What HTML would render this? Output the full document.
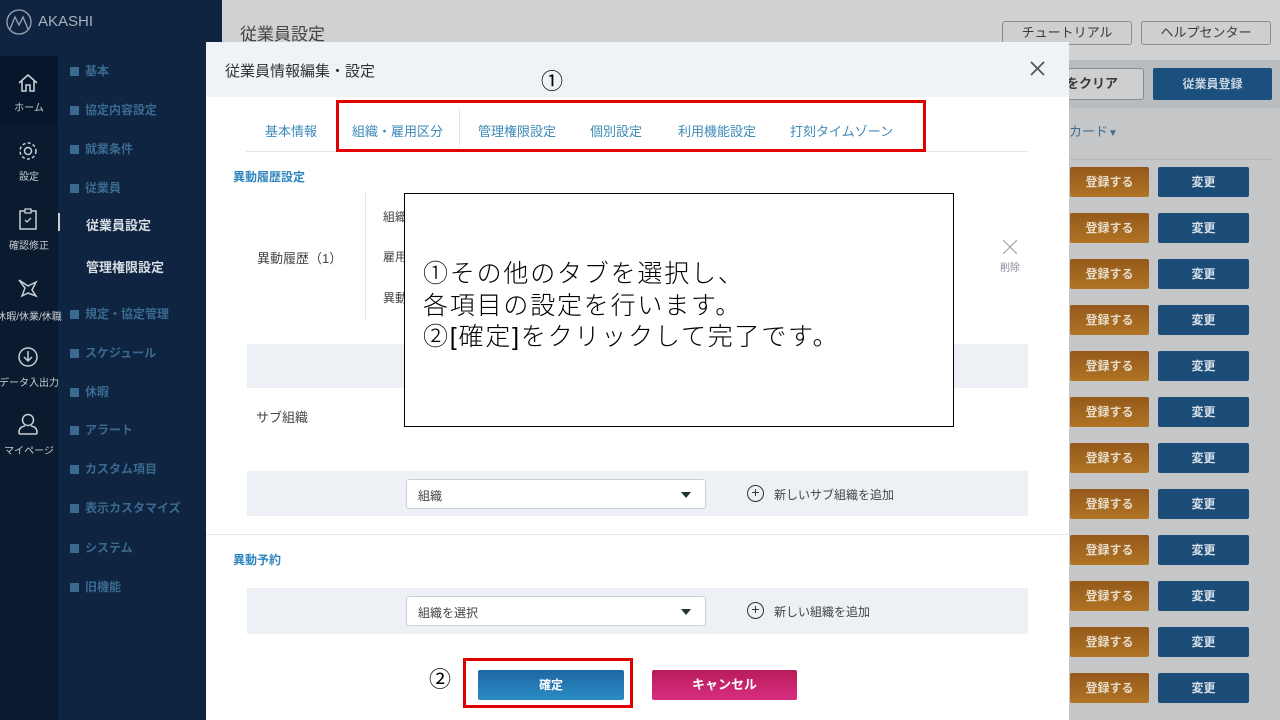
<!DOCTYPE html>
<html><head><meta charset="utf-8"><style>
*{margin:0;padding:0;box-sizing:border-box}
body{width:1280px;height:720px;overflow:hidden;position:relative;font-family:"Liberation Sans","Noto Sans CJK JP",sans-serif;background:#c4c6c8}
.a{position:absolute;white-space:nowrap}
.side{left:0;top:0;width:222px;height:720px;background:#0e2440}
.icol{left:0;top:56px;width:58px;height:664px;background:#0a1a2f}
.ic{left:0;width:58px;text-align:center;color:#c9ced4;font-size:10px}
.mi{left:70px;color:#3a6a90;font-size:12px;font-weight:bold}
.mi:before{content:"";display:inline-block;width:9px;height:9px;background:#3a6a90;margin-right:6px;vertical-align:-1px}
.sub{left:86px;color:#d8dde2;font-size:13px;font-weight:bold}
.btn{border:1px solid #8a8c8e;border-radius:3px;text-align:center;font-size:13px;color:#3a3a3a;background:#cdcfd1}
.or{left:1070px;width:79px;height:30px;background:linear-gradient(#94591a,#b07425);color:#e8dcc8;font-size:12px;font-weight:bold;text-align:center;line-height:30px;border-radius:2px}
.bl{left:1158px;width:91px;height:30px;background:#1b4d78;color:#d8e0e8;font-size:12px;font-weight:bold;text-align:center;line-height:30px;border-radius:2px}
.hr{left:1070px;width:202px;height:1px;background:#b5b7b9}
.modal{left:206px;top:42px;width:863px;height:678px;background:#fff}
.mh{left:206px;top:42px;width:863px;height:55px;background:#eef3f7}
.tab{top:121px;font-size:13px;color:#3d8ab8}
.lab{font-size:12px;color:#444}
.band{left:247px;width:781px;background:#edf1f5}
.sel{left:406px;width:300px;height:30px;background:#fff;border:1px solid #c8d0d8;border-radius:3px;font-size:12px;color:#444;padding:7px 11px}
.sel:after{content:"";position:absolute;right:14px;top:12px;border-left:5px solid transparent;border-right:5px solid transparent;border-top:6px solid #233}
.plus{width:17px;height:17px;border:1.5px solid #333;border-radius:50%;text-align:center;font-size:14px;line-height:13px;color:#333}
.red{border:3px solid #e00000}
</style></head><body>
<div class="a side"></div>
<div class="a icol"></div>
<div class="a" style="left:0;top:56px;width:58px;height:69px;background:#07162a"></div>
<svg class="a" style="left:5px;top:8px" width="28" height="28" viewBox="0 0 28 28"><circle cx="14" cy="14" r="12" fill="none" stroke="#9aa6b2" stroke-width="1.3"/><path d="M5 21 L10 9 L14 17 L18 9 L23 21" fill="none" stroke="#9aa6b2" stroke-width="1.3"/></svg>
<div class="a" style="left:38px;top:13px;color:#a8b2bc;font-size:15px">AKASHI</div>
<svg class="a" style="left:17px;top:72px" width="22" height="22" viewBox="0 0 22 22"><path d="M2 11 L11 3 L20 11 M5 9 V19 H9 V13 H13 V19 H17 V9" fill="none" stroke="#c9ced4" stroke-width="1.6"/></svg>
<div class="a ic" style="top:99px">ホーム</div>
<svg class="a" style="left:17px;top:140px" width="22" height="22" viewBox="0 0 22 22"><circle cx="11" cy="11" r="3.5" fill="none" stroke="#c9ced4" stroke-width="1.5"/><circle cx="11" cy="11" r="8" fill="none" stroke="#c9ced4" stroke-width="1.5" stroke-dasharray="3 2.3"/></svg>
<div class="a ic" style="top:168px">設定</div>
<svg class="a" style="left:18px;top:207px" width="20" height="24" viewBox="0 0 20 24"><rect x="2" y="4" width="16" height="18" fill="none" stroke="#c9ced4" stroke-width="1.5"/><rect x="7" y="2" width="6" height="4" fill="#0a1a2f" stroke="#c9ced4" stroke-width="1.3"/><path d="M7 13 L9 15 L13 11" fill="none" stroke="#c9ced4" stroke-width="1.3"/></svg>
<div class="a ic" style="top:237px">確認修正</div>
<div class="a" style="left:58px;top:213px;width:2px;height:18px;background:#c9ced4"></div>
<svg class="a" style="left:16px;top:276px" width="24" height="24" viewBox="0 0 24 24"><path d="M3 4 L12 10 L20 6 L16 14 L20 20 L12 17 L6 20 L9 12 Z" fill="none" stroke="#c9ced4" stroke-width="1.5"/></svg>
<div class="a ic" style="top:308px;left:-4px;width:66px">休暇/休業/休職</div>
<svg class="a" style="left:17px;top:346px" width="22" height="22" viewBox="0 0 22 22"><circle cx="11" cy="11" r="9" fill="none" stroke="#c9ced4" stroke-width="1.5"/><path d="M11 5 V15 M7 11 L11 15 L15 11" fill="none" stroke="#c9ced4" stroke-width="1.5"/></svg>
<div class="a ic" style="top:374px;left:-4px;width:66px">データ入出力</div>
<svg class="a" style="left:17px;top:412px" width="22" height="24" viewBox="0 0 22 24"><circle cx="11" cy="8" r="5.5" fill="none" stroke="#c9ced4" stroke-width="1.5"/><path d="M2 22 V20 Q2 15 8 14 M20 22 V20 Q20 15 14 14 M2 22 H20" fill="none" stroke="#c9ced4" stroke-width="1.5"/></svg>
<div class="a ic" style="top:442px">マイページ</div>
<div class="a mi" style="top:62px">基本</div>
<div class="a mi" style="top:101px">協定内容設定</div>
<div class="a mi" style="top:140px">就業条件</div>
<div class="a mi" style="top:179px">従業員</div>
<div class="a sub" style="top:215px">従業員設定</div>
<div class="a sub" style="top:257px">管理権限設定</div>
<div class="a mi" style="top:305px">規定・協定管理</div>
<div class="a mi" style="top:344px">スケジュール</div>
<div class="a mi" style="top:383px">休暇</div>
<div class="a mi" style="top:421px">アラート</div>
<div class="a mi" style="top:460px">カスタム項目</div>
<div class="a mi" style="top:499px">表示カスタマイズ</div>
<div class="a mi" style="top:539px">システム</div>
<div class="a mi" style="top:578px">旧機能</div>

<div class="a" style="left:222px;top:0;width:1058px;height:60px;background:#cfd1d3"></div>
<div class="a" style="left:240px;top:20px;font-size:17px;color:#444">従業員設定</div>
<div class="a btn" style="left:1002px;top:21px;width:130px;height:24px;line-height:22px">チュートリアル</div>
<div class="a btn" style="left:1141px;top:21px;width:130px;height:24px;line-height:22px">ヘルプセンター</div>
<div class="a" style="left:1069px;top:60px;width:211px;height:48px;background:#b9bcbf"></div>
<div class="a btn" style="left:1040px;top:68px;width:104px;height:32px;line-height:30px;font-weight:bold">をクリア</div>
<div class="a" style="left:1153px;top:68px;width:119px;height:32px;line-height:32px;background:#1b4f7d;color:#c8d4e0;font-weight:bold;font-size:12px;text-align:center;border-radius:2px">従業員登録</div>
<div class="a" style="left:1069px;top:121px;font-size:13px;color:#3d6e94">カード<span style="font-size:10px">▼</span></div>
<div class="a hr" style="top:159px"></div>
<div class="a or" style="top:167px">登録する</div><div class="a bl" style="top:167px">変更</div>
<div class="a or" style="top:213px">登録する</div><div class="a bl" style="top:213px">変更</div>
<div class="a or" style="top:259px">登録する</div><div class="a bl" style="top:259px">変更</div>
<div class="a or" style="top:305px">登録する</div><div class="a bl" style="top:305px">変更</div>
<div class="a or" style="top:351px">登録する</div><div class="a bl" style="top:351px">変更</div>
<div class="a or" style="top:397px">登録する</div><div class="a bl" style="top:397px">変更</div>
<div class="a or" style="top:443px">登録する</div><div class="a bl" style="top:443px">変更</div>
<div class="a or" style="top:489px">登録する</div><div class="a bl" style="top:489px">変更</div>
<div class="a or" style="top:535px">登録する</div><div class="a bl" style="top:535px">変更</div>
<div class="a or" style="top:581px">登録する</div><div class="a bl" style="top:581px">変更</div>
<div class="a or" style="top:627px">登録する</div><div class="a bl" style="top:627px">変更</div>
<div class="a or" style="top:673px">登録する</div><div class="a bl" style="top:673px">変更</div>

<div class="a modal"></div>
<div class="a mh"></div>
<div class="a" style="left:225px;top:60px;font-size:15px;color:#333">従業員情報編集・設定</div>
<svg class="a" style="left:1030px;top:61px" width="15" height="15" viewBox="0 0 15 15"><path d="M1 1 L14 14 M14 1 L1 14" stroke="#555" stroke-width="1.8"/></svg>
<div class="a" style="left:541px;top:64px;font-size:22px;color:#000">①</div>
<div class="a" style="left:246px;top:151px;width:782px;height:1px;background:#e2e8ee"></div>
<div class="a tab" style="left:265px">基本情報</div>
<div class="a tab" style="left:352px">組織・雇用区分</div>
<div class="a" style="left:459px;top:108px;width:1px;height:40px;background:#e2e8ee"></div>
<div class="a tab" style="left:478px">管理権限設定</div>
<div class="a tab" style="left:590px">個別設定</div>
<div class="a tab" style="left:678px">利用機能設定</div>
<div class="a tab" style="left:790px">打刻タイムゾーン</div>
<div class="a red" style="left:336px;top:100px;width:590px;height:52px"></div>
<div class="a" style="left:233px;top:168px;font-size:12px;font-weight:bold;color:#2f86bf">異動履歴設定</div>
<div class="a" style="left:365px;top:192px;width:1px;height:128px;background:#e2e8ee"></div>
<div class="a lab" style="left:257px;top:248px;font-size:13px">異動履歴（1）</div>
<div class="a lab" style="left:383px;top:208px">組織</div>
<div class="a lab" style="left:383px;top:248px">雇用</div>
<div class="a lab" style="left:383px;top:289px">異動</div>
<svg class="a" style="left:1003px;top:240px" width="14" height="14" viewBox="0 0 14 14"><path d="M0 0 L14 14 M14 0 L0 14" stroke="#99a" stroke-width="1"/></svg>
<div class="a" style="left:1000px;top:259px;font-size:10px;color:#889">削除</div>
<div class="a band" style="top:344px;height:44px"></div>
<div class="a lab" style="left:256px;top:407px;font-size:13px">サブ組織</div>
<div class="a band" style="top:471px;height:45px"></div>
<div class="a sel" style="top:479px">組織</div>
<div class="a plus" style="left:747px;top:485px">+</div>
<div class="a lab" style="left:774px;top:486px">新しいサブ組織を追加</div>
<div class="a" style="left:206px;top:534px;width:863px;height:1px;background:#e2e8ee"></div>
<div class="a" style="left:233px;top:551px;font-size:12px;font-weight:bold;color:#2f86bf">異動予約</div>
<div class="a band" style="top:588px;height:46px"></div>
<div class="a sel" style="top:596px">組織を選択</div>
<div class="a plus" style="left:747px;top:602px">+</div>
<div class="a lab" style="left:774px;top:603px">新しい組織を追加</div>
<div class="a" style="left:429px;top:662px;font-size:22px;color:#000">②</div>
<div class="a red" style="left:463px;top:658px;width:170px;height:50px"></div>
<div class="a" style="left:478px;top:670px;width:146px;height:30px;background:linear-gradient(#1e66a4,#2a8cc4);color:#fff;font-size:12px;font-weight:bold;text-align:center;line-height:30px;border-radius:2px">確定</div>
<div class="a" style="left:652px;top:670px;width:145px;height:30px;background:linear-gradient(#b81c5a,#d62e80);color:#fff;font-size:13px;font-weight:bold;text-align:center;line-height:30px;border-radius:2px">キャンセル</div>

<div class="a" style="left:404px;top:193px;width:550px;height:234px;background:#fff;border:1px solid #000"></div>
<div class="a" style="left:423px;top:259px;font-size:25px;line-height:31.5px;letter-spacing:1.8px;color:#000;font-weight:300">①その他のタブを選択し、<br>各項目の設定を行います。<br>②[確定]をクリックして完了です。</div>
</body></html>
